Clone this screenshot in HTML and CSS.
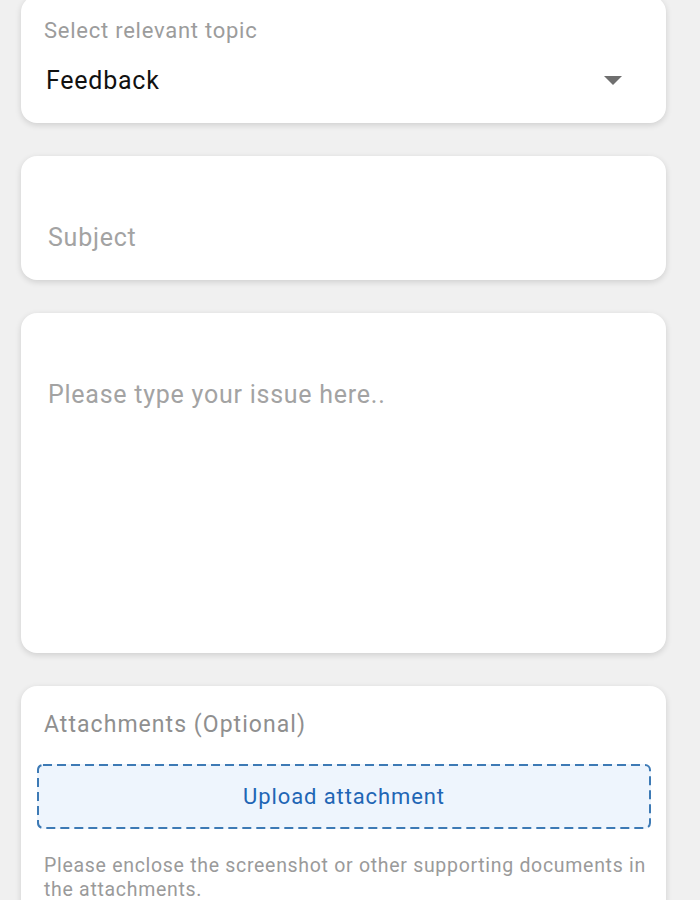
FILE: index.html
```html
<!DOCTYPE html>
<html lang="en">
<head>
<meta charset="utf-8">
<link rel="stylesheet" href="styles.css">
</head>
<body>
<main class="form">
  <section class="card card-topic">
    <div class="label">Select relevant topic</div>
    <div class="select-row">
      <span class="select-value">Feedback</span>
      <svg class="caret" width="18" height="10" viewBox="0 0 18 10"><path d="M0 0 H18 L9 9 Z" fill="#6f6f6f"/></svg>
    </div>
  </section>
  <section class="card card-subject">
    <div class="placeholder">Subject</div>
  </section>
  <section class="card card-issue">
    <div class="placeholder">Please type your issue here..</div>
  </section>
  <section class="card card-attach">
    <div class="attach-label">Attachments (Optional)</div>
    <div class="upload">
      <svg class="upload-border" aria-hidden="true"><rect class="upload-rect"/></svg>
      <span class="upload-text">Upload attachment</span>
    </div>
    <p class="hint">Please enclose the screenshot or other supporting documents in the attachments.</p>
  </section>
</main>
</body>
</html>
```
FILE: styles.css
```css
html, body {
  margin: 0;
  padding: 0;
  background: #f0f0f0;
  font-family: Roboto, "Noto Sans", sans-serif;
}
.form {
  display: flex;
  flex-direction: column;
  gap: 33px;
  padding: 0 34px 0 21px;
  margin-top: -4px;
}
.card {
  background: #fff;
  border-radius: 16px;
  box-shadow: 0 2px 6px rgba(0,0,0,0.14);
  box-sizing: border-box;
}
.card-topic {
  height: 127px;
  padding: 21px 44px 0 23px;
}
.label {
  font-size: 22px;
  color: #9c9c9c;
  line-height: 28px;
  letter-spacing: 0.75px;
}
.select-row {
  display: flex;
  align-items: center;
  justify-content: space-between;
  margin-top: 20px;
}
.select-value {
  font-size: 25px;
  color: #111;
  line-height: 32px;
  padding-left: 2px;
  letter-spacing: 0.75px;
}
.caret { margin-top: 0; }
.card-subject {
  height: 124px;
  padding: 65px 27px 0;
}
.placeholder {
  font-size: 25px;
  color: #a3a3a3;
  line-height: 34px;
  letter-spacing: 0.75px;
}
.card-issue {
  height: 340px;
  padding: 65px 27px 0;
}
.card-attach {
  padding: 24px 15px 20px 16px;
  border-bottom-left-radius: 0;
  border-bottom-right-radius: 0;
}
.attach-label {
  font-size: 23px;
  color: #8f8f8f;
  line-height: 30px;
  padding-left: 7px;
  letter-spacing: 1.05px;
}
.upload {
  position: relative;
  margin-top: 24px;
  height: 65px;
  border-radius: 6px;
  background: #eef5fd;
  display: flex;
  align-items: center;
  justify-content: center;
}
.upload-border {
  position: absolute;
  inset: 0;
  width: 100%;
  height: 100%;
  overflow: visible;
}
.upload-rect {
  x: 1px;
  y: 1px;
  width: calc(100% - 2px);
  height: calc(100% - 2px);
  rx: 5px;
  fill: none;
  stroke: #3d7ab5;
  stroke-width: 2;
  stroke-dasharray: 9 5;
}
.upload-text {
  position: relative;
  color: #1f66b5;
  font-size: 22px;
  letter-spacing: 0.9px;
}
.hint {
  margin: 25px 0 0;
  padding-left: 7px;
  font-size: 19.5px;
  line-height: 24px;
  color: #9a9a9a;
  letter-spacing: 0.7px;
}
```
